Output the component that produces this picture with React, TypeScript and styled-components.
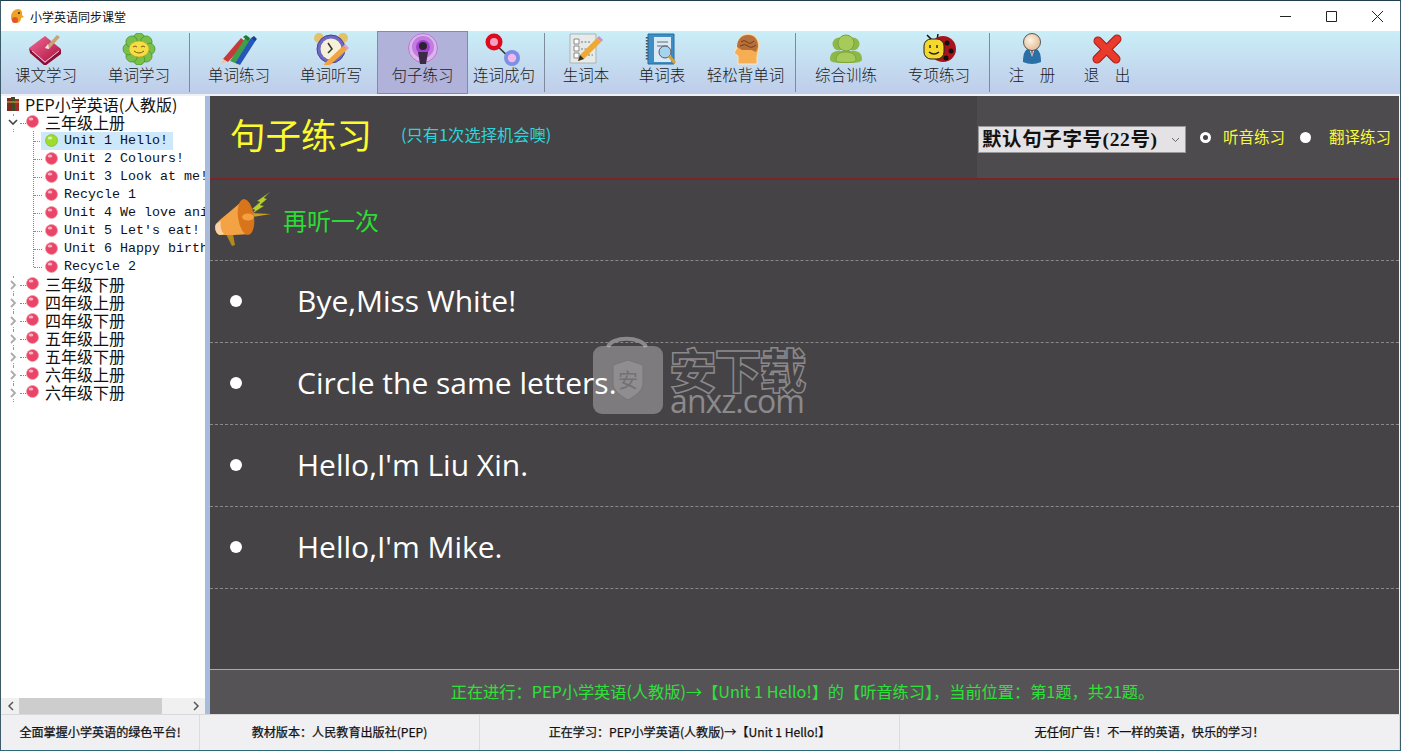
import React from "react";
import styled, { createGlobalStyle } from "styled-components";

const Global = createGlobalStyle`
  html, body { margin: 0; padding: 0; background: #fff; overflow: hidden; }
  #root { width: 1401px; height: 751px; }
`;
const CJK = `"Noto Sans CJK SC", "Liberation Sans", sans-serif`;

const Window = styled.div`
  width: 1401px; height: 751px; box-sizing: border-box; display: flex; flex-direction: column;
  border-top: 1px solid #1f3f4f; border-left: 1px solid #3c5a68; border-right: 1px solid #3c5a68; border-bottom: 1px solid #2d6a78;
  font-family: ${CJK}; background: #f0f0f0; position: relative; overflow: hidden;
`;
const TitleBar = styled.div`
  height: 30px; flex: none; background: #fff; display: flex; align-items: center; padding-left: 8px;
`;
const TitleText = styled.span` font-size: 12px; color: #111; margin-left: 5px; `;
const WinControls = styled.div` margin-left: auto; display: flex; height: 100%; `;
const WinBtn = styled.div` width: 46px; display: flex; align-items: center; justify-content: center; `;
const Toolbar = styled.div`
  height: 63px; flex: none; display: flex; align-items: stretch;
  background: linear-gradient(#caeef7, #bfcce9); border-bottom: 1px solid #eef2f7;
`;
const Tool = styled.div<{ $w: number; $active?: boolean; $mr?: number }>`
  width: ${p => p.$w}px; flex: none; box-sizing: border-box; display: flex; flex-direction: column; align-items: center;
  margin-right: ${p => p.$mr ?? 0}px;
  padding-top: ${p => (p.$active ? 1 : 2)}px; font-size: 15.5px; font-weight: 300; line-height: 19px; color: #1a1a1a; white-space: pre;
  ${p => (p.$active ? "background: #b0b2da; border: 1px solid #8288b4;" : "")}
  svg { display: block; flex: none; height: 32px; width: 36px; }
`;
const ToolLabel = styled.span``;
const Sep = styled.div` width: 1px; flex: none; margin: 2px 0; background: #7d8b9c; `;
const Body = styled.div` flex: 1; min-height: 0; display: flex; margin-top: 1px; `;
const TreePane = styled.div` width: 204px; flex: none; background: #fff; display: flex; flex-direction: column; `;
const TreeList = styled.div` flex: 1; overflow: hidden; position: relative; `;
const Row = styled.div<{ $indent: number; $mono?: boolean }>`
  height: 18px; box-sizing: border-box; display: flex; align-items: center; position: relative; white-space: nowrap;
  padding-left: ${p => p.$indent}px; color: #111; line-height: 18px; padding-bottom: ${p => (p.$mono ? 0 : 3)}px;
  font-size: ${p => (p.$mono ? "13.33px" : "16px")};
  font-family: ${p => (p.$mono ? `"Liberation Mono", monospace` : CJK)};
`;
const ChildRow = styled(Row)`
  &::before { content: ""; position: absolute; left: 32px; top: -1px; bottom: 0; border-left: 1px dotted #888; }
  &::after { content: ""; position: absolute; left: 33px; top: 9px; width: 8px; border-top: 1px dotted #888; }
`;
const LastChild = styled(ChildRow)` &::before { bottom: 9px; } `;
const Select = styled.span<{ $on?: boolean }>`
  display: inline-flex; align-items: center; height: 18px; padding: 0 5px 0 4px; position: relative; z-index: 1;
  ${p => (p.$on ? "background: #cde8fb;" : "")}
  svg { margin: -1px 6px 0 0; flex: none; }
`;
const GroupRow = styled(Row)`
  &::before { content: ""; position: absolute; left: 12px; top: 0; bottom: 0; border-left: 1px dotted #999; }
  &::after { content: ""; position: absolute; left: 19px; top: 9px; width: 6px; border-top: 1px dotted #888; }
`;
const Chevron = styled.span`
  position: absolute; left: 6px; top: 3px; width: 12px; height: 11px; background: #fff; z-index: 1;
  display: flex; align-items: center; justify-content: center;
`;
const BallWrap = styled.span` margin-right: 6px; display: inline-flex; position: relative; z-index: 1; `;
const RootLabel = styled.span` margin-left: -1px; `;
const HScroll = styled.div` height: 16px; flex: none; background: #f0f0f0; display: flex; align-items: center; `;
const ScrollArrow = styled.div` width: 18px; flex: none; display: flex; justify-content: center; `;
const ScrollTrack = styled.div` flex: 1; height: 100%; `;
const ScrollThumb = styled.div` width: 143px; height: 100%; background: #cdcdcd; `;
const Splitter = styled.div` width: 5px; flex: none; background: #a7bcdc; `;
const Main = styled.div` flex: 1; min-width: 0; background: #454345; display: flex; flex-direction: column; margin-right: 1px; `;
const Head = styled.div` flex: none; display: flex; border-bottom: 2px solid #7c2325; box-sizing: border-box; height: 84px; `;
const HeadLeft = styled.div` width: 767px; flex: none; display: flex; align-items: center; padding: 0 0 6px 20px; box-sizing: border-box; `;
const HeadTitle = styled.span` font-size: 35.5px; line-height: 40px; color: #fbfb2c; width: 171px; flex: none; `;
const HeadNote = styled.span` font-size: 16.3px; color: #2fd3da; `;
const HeadRight = styled.div`
  flex: 1; background: #4d4b4d; display: flex; align-items: center; padding: 1px 0 0 1px; font-size: 15.5px; color: #f8f83a;
`;
const SelectBox = styled.div` position: relative; width: 208px; height: 27px; flex: none; margin: 3px 14px 0 0; `;
const SizeSelect = styled.select`
  appearance: none; width: 100%; height: 100%; background: #e4e2e4; border: 1px solid #999; border-radius: 0; color: #111;
  font: bold 19.5px "Liberation Serif", "Noto Sans CJK SC", serif; letter-spacing: .6px; padding: 0 0 0 3px; outline: none;
`;
const SelectArrow = styled.span` position: absolute; right: 6px; top: 11px; display: flex; pointer-events: none; `;
const Radio = styled.span<{ $on?: boolean }>`
  width: 11px; height: 11px; border-radius: 50%; box-sizing: border-box; flex: none;
  margin-right: ${p => (p.$on ? 12 : 18)}px;
  background: ${p => (p.$on ? "#454345" : "#fff")}; border: ${p => (p.$on ? "3px solid #fff" : "0")};
`;
const RadioText = styled.span<{ $gap: number }>` margin-right: ${p => p.$gap}px; flex: none; position: relative; top: -2px; `;
const ReplayRow = styled.div`
  height: 81px; flex: none; box-sizing: border-box; border-bottom: 1px dashed #8a888a; display: flex; align-items: center;
  padding: 0 0 2px 4px; color: #2bdc35; font-size: 24px;
  svg { margin-right: 9px; }
`;
const Sentence = styled.div`
  height: 82px; flex: none; box-sizing: border-box; border-bottom: 1px dashed #8a888a; display: flex; align-items: center;
  color: #fff; font-size: 30px; padding: 0 0 3px 20px; font-family: "Open Sans", ${CJK};
`;
const Dot = styled.span` width: 12px; height: 12px; border-radius: 50%; background: #fff; margin: 2px 55px 0 0; flex: none; `;
const Spacer = styled.div` flex: 1; `;
const Foot = styled.div`
  height: 45px; flex: none; box-sizing: border-box; border-top: 1px solid #aaa8aa; background: #555355; color: #2fe03a; font-size: 16.2px;
  display: flex; align-items: center; justify-content: center; padding: 0 4px 3px 0;
`;
const Status = styled.div` height: 35px; flex: none; display: flex; background: #f0eff2; border-top: 1px solid #d8d8dc; `;
const Cell = styled.div<{ $w?: number }>`
  ${p => (p.$w ? `width:${p.$w}px; flex:none;` : "flex:1;")} box-sizing: border-box; display: flex; align-items: center; justify-content: center;
  border-right: 1px solid #dcdce0; font-size: 12.1px; color: #111; -webkit-text-stroke: 0.25px #111; padding-bottom: 2px;
`;
const Watermark = styled.div`
  position: absolute; left: 591px; top: 332px; width: 220px; height: 84px; pointer-events: none; display: flex; gap: 3px;
`;
const WmText = styled.div` display: flex; flex-direction: column; align-items: center; width: 140px; margin-top: 11px; `;
const WmCn = styled.div`
  font-size: 47px; line-height: 48px; font-weight: 900; letter-spacing: -2px; color: transparent; -webkit-text-stroke: 1.5px #8b898b;
`;
const WmEn = styled.div` font-size: 32px; line-height: 26px; color: #8b898b; font-family: "Open Sans", sans-serif; margin-top: -4px; letter-spacing: -1px; `;

const Book = () => (
  <svg viewBox="0 0 36 32"><defs><linearGradient id="bk" x1="0" y1="0" x2="1" y2="1"><stop offset="0" stopColor="#f46a95"/><stop offset="1" stopColor="#a80f3e"/></linearGradient></defs>
    <path d="M1 15 L17 3 L33 16 L17 30 Z" fill="url(#bk)"/><path d="M1 15 L17 30 L33 16 L33 21 L17 33 L2 20 Z" fill="#8e0e36"/><path d="M4 18 L17 29 L31 18" stroke="#f3c7d4" strokeWidth="1" fill="none"/>
    <path d="M17 15 L29 2 L32 4 L21 16 Z" fill="#c9a377"/><path d="M17 15 L20 11 L21 16Z" fill="#fde"/></svg>
);
const Flower = () => (
  <svg viewBox="0 0 36 32">{[0, 45, 90, 135, 180, 225, 270, 315].map(a => <ellipse key={a} cx="18" cy="5.5" rx="5.8" ry="5.5" fill="#79c04a" stroke="#3f8c2a" strokeWidth=".7" transform={`rotate(${a} 18 16)`}/>)}
    <ellipse cx="18" cy="16" rx="10" ry="8" fill="#f7dd45" stroke="#c59a1b" strokeWidth=".6"/><path d="M12 14q2-2 4 0M20 14q2-2 4 0M13 18q5 4 10 0" stroke="#7a5a10" strokeWidth="1" fill="none"/></svg>
);
const Pencils = () => (
  <svg viewBox="0 0 36 32"><path d="M2 26 L20 5 L25 9 L7 29Z" fill="#c83a3a"/><path d="M2 26 L0 31 L6 29Z" fill="#e8c9a0"/>
    <path d="M9 28 L25 4 L30 6 L14 30Z" fill="#3ca048"/><path d="M14 30 L30 5 L35 7 L19 32Z" fill="#2656b8"/><path d="M15 31 L14 34 L19 32Z" fill="#e8c9a0"/><path d="M22 4l3-2 4 3-2 3z" fill="#1c7b30"/><path d="M30 5l3-2 3 3-2 2z" fill="#183f95"/></svg>
);
const Clock = () => (
  <svg viewBox="0 0 36 32"><circle cx="6" cy="5" r="5" fill="#e2c16a"/><circle cx="30" cy="5" r="5" fill="#e2c16a"/><circle cx="18" cy="16" r="14" fill="#6f69c4" stroke="#47428f"/><circle cx="18" cy="16" r="10.5" fill="#f5f0d8"/>
    <path d="M15 10l4 6-4 4" stroke="#333" strokeWidth="1.5" fill="none"/><path d="M12 30L30 13l4 4-17 15-7 1z" fill="#f0a540"/><path d="M30 13l4 4 2-2-4-4z" fill="#e0a0c0"/></svg>
);
const Pod = () => (
  <svg viewBox="0 0 36 32"><circle cx="18" cy="15" r="15" fill="#d9b5ea"/><circle cx="18" cy="14" r="11" fill="#c27ce0"/><circle cx="18" cy="14" r="7" fill="#a23fd0"/><circle cx="18" cy="15" r="14.5" fill="none" stroke="#a25ac8" strokeWidth=".7"/>
    <circle cx="18" cy="13" r="4" fill="#2c2330"/><path d="M13 19h10l-2 12h-6z" fill="#3d2a48"/></svg>
);
const Link = () => (
  <svg viewBox="0 0 36 32" style={{ overflow: "visible" }}><path d="M8 10L26 27" stroke="#333" strokeWidth="1.5"/><circle cx="8" cy="9" r="8.5" fill="#dd0b1d"/><circle cx="8" cy="9" r="4" fill="#f4a0c0"/><circle cx="26" cy="25" r="8" fill="#7d8fe6"/><circle cx="26" cy="25" r="4.2" fill="#f2b8ee"/></svg>
);
const Checklist = () => (
  <svg viewBox="0 0 36 32"><path d="M2 1h26v29H2z" fill="#e6ebea" stroke="#aab3b5"/><path d="M6 13h5v5H6zM6 20h5v5H6zM6 6h5v5H6z" fill="#fff" stroke="#888"/><path d="M13 9h10M13 22h12M13 16h8" stroke="#777" strokeDasharray="2 1.5"/>
    <path d="M12 22L29 5l4 4-17 17-6 2z" fill="#f0a830"/><path d="M29 5l2-2 4 4-2 2z" fill="#c790c8"/><path d="M10 28l2-6 4 4z" fill="#333"/></svg>
);
const Notebook = () => (
  <svg viewBox="0 0 36 32"><path d="M4 1h26v30H4z" fill="#3d8ec7" stroke="#2b6a9c"/><path d="M10 4h17v25H10z" fill="#dbe9f3"/><path d="M3 4v24" stroke="#555" strokeWidth="2.4" strokeDasharray="1.5 1.5"/><path d="M13 9h11M13 13h11" stroke="#5a6d80"/>
    <circle cx="21" cy="19" r="6" fill="#a5d4ef" stroke="#556"/><path d="M25 23l6 7" stroke="#d8a040" strokeWidth="3"/></svg>
);
const Head2 = () => (
  <svg viewBox="0 0 36 32"><path d="M10 31V23L6 20l3-5C9 5 14 1 20 1c7 0 11 5 11 12 0 5-2 8-2 11v7z" fill="#f7ae52" stroke="#fbe5c0"/><path d="M9 14C9 6 14 2 20 2c7 0 10 5 10 12l-2 5-5-2H14z" fill="#b8703a"/><path d="M13 9q3-3 6 0t7-1M12 13q5-3 8 0t8-1" stroke="#6f3d1c" fill="none"/></svg>
);
const Users = () => (
  <svg viewBox="0 0 36 32"><circle cx="11" cy="11" r="6.5" fill="#8cb847"/><circle cx="25" cy="11" r="6.5" fill="#8cb847"/><path d="M2 26c0-6 4-8 8-8h16c4 0 8 2 8 8 0 3-3 4-16 4S2 29 2 26z" fill="#8cb847"/><circle cx="18" cy="10" r="8" fill="#a6cb5a" stroke="#7ea23c"/><path d="M8 28c0-7 4-9 10-9s10 2 10 9c0 2-20 2-20 0z" fill="#a6cb5a" stroke="#7ea23c"/></svg>
);
const Bug = () => (
  <svg viewBox="0 0 36 32"><path d="M6 2l5 5M17 1l-1 6" stroke="#111" strokeWidth="1.5"/><circle cx="22" cy="16" r="13" fill="#a8141c"/><circle cx="26" cy="10" r="2.5" fill="#111"/><circle cx="30" cy="18" r="2.5" fill="#111"/><circle cx="25" cy="25" r="2.5" fill="#111"/>
    <rect x="3" y="6" width="20" height="20" rx="7" fill="#f4d92c" stroke="#222"/><path d="M9 12v3M16 12v3M8 19q5 4 10 0" stroke="#222" strokeWidth="1.4" fill="none"/></svg>
);
const Person = () => (
  <svg viewBox="0 0 36 32"><defs><radialGradient id="fc" cx=".4" cy=".4"><stop offset="0" stopColor="#fff3e2"/><stop offset="1" stopColor="#e8c8a6"/></radialGradient></defs><path d="M9 29c0-9 2-14 9-14s9 5 9 14q-9 4-18 0z" fill="#2a6fa5"/><path d="M15 15h6l-3 9z" fill="#e8edf2"/><path d="M17 17h2l-1 6z" fill="#bb2b3a"/><circle cx="18" cy="9" r="8.5" fill="url(#fc)" stroke="#555"/></svg>
);
const CloseX = () => (
  <svg viewBox="0 0 36 32"><path d="M9 8L27 26M28 6L8 26" stroke="#a81a14" strokeWidth="9" strokeLinecap="round"/><path d="M9 8L27 26M28 6L8 26" stroke="#ea3a2c" strokeWidth="7" strokeLinecap="round"/></svg>
);
const Horn = () => (
  <svg width="60" height="56" viewBox="0 0 60 56"><path d="M56 1L43 10l3 1-8 7 3 1-5 5 14-9-4-1 7-6-3-1z" fill="#b6d22a" stroke="#555" strokeWidth=".4"/><path d="M37 22l20 1-19 3z" fill="#d0a01a"/>
    <path d="M12 43l6 12 3-1-2-11z" fill="#b58a1c"/><path d="M30 8C20 18 8 26 2 33c-2 4 0 10 4 11 8 0 20 0 30-1z" fill="#f3a344"/><path d="M2 33c-2 4 0 10 4 11l4-1c-3-3-4-8-3-13z" fill="#f8d2a6"/><ellipse cx="32" cy="26" rx="8" ry="18" fill="#d8751a" transform="rotate(-8 32 26)"/><ellipse cx="34" cy="26" rx="6" ry="3.5" fill="#f4a040"/></svg>
);
const Ball = ({ g }: { g?: boolean }) => (
  <svg width="13" height="13" viewBox="0 0 13 13"><circle cx="6.5" cy="6.5" r="6" fill={g ? "#9cdc2c" : "#ea4468"} stroke={g ? "#8fba30" : "#f09a9a"} strokeWidth=".8"/><ellipse cx="5" cy="4" rx="2.3" ry="1.6" fill="#fff" opacity=".6"/></svg>
);
const Duck = () => (
  <svg width="16" height="16" viewBox="0 0 16 16"><path d="M2 9c0-4 3-8 7-8 3 0 5 3 4 6l2 2-3 1c0 3-2 5-5 5S2 13 2 9z" fill="#f0a226"/><circle cx="6" cy="12" r="3" fill="#e0562a"/><circle cx="10" cy="5" r="1" fill="#222"/></svg>
);
const Books = () => (
  <svg width="14" height="16" viewBox="0 0 14 16"><path d="M1 2h4v13H1z" fill="#7c2a20"/><path d="M5 1h4v14H5z" fill="#3e4a22"/><path d="M9 3h4v12H9z" fill="#a02a2c"/><path d="M1 6h12" stroke="#d8b040"/></svg>
);
const ChevDown = () => <svg width="10" height="7" viewBox="0 0 10 7"><path d="M1 1l4 4 4-4" fill="none" stroke="#444" strokeWidth="1.6"/></svg>;
const ChevRight = () => <svg width="7" height="10" viewBox="0 0 7 10"><path d="M1 1l4 4-4 4" fill="none" stroke="#aaa" strokeWidth="1.8"/></svg>;
const ArrowL = () => <svg width="7" height="10" viewBox="0 0 7 10"><path d="M6 1L2 5l4 4" fill="none" stroke="#555" strokeWidth="1.5"/></svg>;
const ArrowR = () => <svg width="7" height="10" viewBox="0 0 7 10"><path d="M1 1l4 4-4 4" fill="none" stroke="#555" strokeWidth="1.5"/></svg>;
const SelChev = () => <svg width="9" height="6" viewBox="0 0 9 6"><path d="M1 1l3.5 3.5L8 1" fill="none" stroke="#666"/></svg>;

const groups = ["三年级下册", "四年级上册", "四年级下册", "五年级上册", "五年级下册", "六年级上册", "六年级下册"];
const units = ["Unit 2 Colours!", "Unit 3 Look at me!", "Recycle 1", "Unit 4 We love animals", "Unit 5 Let's eat!", "Unit 6 Happy birthday"];
const sentences = ["Bye,Miss White!", "Circle the same letters.", "Hello,I'm Liu Xin.", "Hello,I'm Mike."];

export default function App() {
  return (
    <Window>
      <Global />
      <TitleBar>
        <Duck />
        <TitleText>小学英语同步课堂</TitleText>
        <WinControls>
          <WinBtn><svg width="11" height="11" viewBox="0 0 11 11"><path d="M0 5.5h11" stroke="#222"/></svg></WinBtn>
          <WinBtn><svg width="11" height="11" viewBox="0 0 11 11"><path d="M.5.5h10v10H.5z" fill="none" stroke="#222"/></svg></WinBtn>
          <WinBtn><svg width="11" height="11" viewBox="0 0 11 11"><path d="M0 0l11 11M11 0L0 11" stroke="#222"/></svg></WinBtn>
        </WinControls>
      </TitleBar>
      <Toolbar>
        <Tool $w={90}><Book /><ToolLabel>课文学习</ToolLabel></Tool>
        <Tool $w={96} $mr={2}><Flower /><ToolLabel>单词学习</ToolLabel></Tool>
        <Sep />
        <Tool $w={98}><Pencils /><ToolLabel>单词练习</ToolLabel></Tool>
        <Tool $w={86} $mr={3}><Clock /><ToolLabel>单词听写</ToolLabel></Tool>
        <Tool $w={91} $active><Pod /><ToolLabel>句子练习</ToolLabel></Tool>
        <Tool $w={72} $mr={4}><Link /><ToolLabel>连词成句</ToolLabel></Tool>
        <Sep />
        <Tool $w={82}><Checklist /><ToolLabel>生词本</ToolLabel></Tool>
        <Tool $w={70}><Notebook /><ToolLabel>单词表</ToolLabel></Tool>
        <Tool $w={97} $mr={1}><Head2 /><ToolLabel>轻松背单词</ToolLabel></Tool>
        <Sep />
        <Tool $w={100}><Users /><ToolLabel>综合训练</ToolLabel></Tool>
        <Tool $w={86} $mr={7}><Bug /><ToolLabel>专项练习</ToolLabel></Tool>
        <Sep />
        <Tool $w={84}><Person /><ToolLabel>注{"\u3000"}册</ToolLabel></Tool>
        <Tool $w={66}><CloseX /><ToolLabel>退{"\u3000"}出</ToolLabel></Tool>
      </Toolbar>
      <Body>
        <TreePane>
          <TreeList>
            <Row $indent={5}><BallWrap><Books /></BallWrap><RootLabel>PEP小学英语(人教版)</RootLabel></Row>
            <GroupRow $indent={25}><Chevron><ChevDown /></Chevron><BallWrap><Ball /></BallWrap>三年级上册</GroupRow>
            <ChildRow $indent={40} $mono><Select $on><Ball g />Unit 1 Hello!</Select></ChildRow>
            {units.map(u => <ChildRow key={u} $indent={40} $mono><Select><Ball />{u}</Select></ChildRow>)}
            <LastChild $indent={40} $mono><Select><Ball />Recycle 2</Select></LastChild>
            {groups.map(g => <GroupRow key={g} $indent={25}><Chevron><ChevRight /></Chevron><BallWrap><Ball /></BallWrap>{g}</GroupRow>)}
          </TreeList>
          <HScroll>
            <ScrollArrow><ArrowL /></ScrollArrow>
            <ScrollTrack><ScrollThumb /></ScrollTrack>
            <ScrollArrow><ArrowR /></ScrollArrow>
          </HScroll>
        </TreePane>
        <Splitter />
        <Main>
          <Head>
            <HeadLeft><HeadTitle>句子练习</HeadTitle><HeadNote>(只有1次选择机会噢)</HeadNote></HeadLeft>
            <HeadRight>
              <SelectBox>
                <SizeSelect defaultValue="22"><option value="22">默认句子字号(22号)</option></SizeSelect>
                <SelectArrow><SelChev /></SelectArrow>
              </SelectBox>
              <Radio $on /><RadioText $gap={15}>听音练习</RadioText>
              <Radio /><RadioText $gap={0}>翻译练习</RadioText>
            </HeadRight>
          </Head>
          <ReplayRow><Horn />再听一次</ReplayRow>
          {sentences.map(s => <Sentence key={s}><Dot />{s}</Sentence>)}
          <Spacer />
          <Foot>正在进行：PEP小学英语(人教版)→【Unit 1 Hello!】的【听音练习】，当前位置：第1题，共21题。</Foot>
        </Main>
      </Body>
      <Status>
        <Cell $w={199}>全面掌握小学英语的绿色平台!</Cell>
        <Cell $w={280}>教材版本：人民教育出版社(PEP)</Cell>
        <Cell $w={420}>正在学习：PEP小学英语(人教版)→【Unit 1 Hello!】</Cell>
        <Cell>无任何广告！不一样的英语，快乐的学习！</Cell>
      </Status>
      <Watermark>
        <svg width="72" height="82" viewBox="0 0 72 82"><path d="M16 14c3-11 34-11 38 0" fill="none" stroke="#8b898b" strokeWidth="4"/><rect x="1" y="13" width="70" height="68" rx="9" fill="#fff" opacity=".3"/><path d="M21 32l15-5 15 5v18c0 8-8 13-15 17-7-4-15-9-15-17z" fill="#8f8d8f" stroke="#777577" strokeWidth="1"/><text x="36" y="55" textAnchor="middle" fontSize="20" fill="#737173">安</text></svg>
        <WmText><WmCn>安下载</WmCn><WmEn>anxz.com</WmEn></WmText>
      </Watermark>
    </Window>
  );
}
